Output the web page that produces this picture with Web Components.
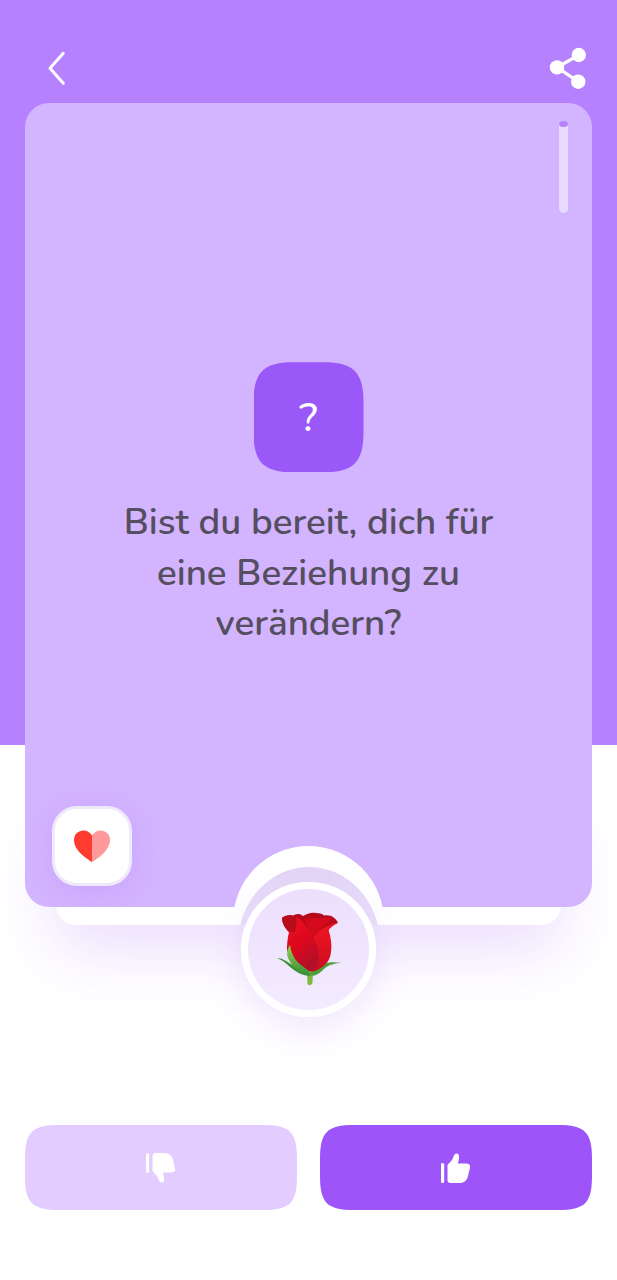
<!DOCTYPE html>
<html lang="de">
<head>
<meta charset="utf-8">
<title>Frage</title>
<style>
  html, body { margin: 0; padding: 0; background: #fff; }
  body { font-family: "Nunito", "Lato", "Noto Sans", sans-serif; }
</style>
</head>
<body>
<love-app>
  <app-header slot="header"></app-header>
  <question-card slot="card">Bist du bereit, dich für eine Beziehung zu verändern?</question-card>
  <vote-bar slot="footer"></vote-bar>
</love-app>

<script>
class LoveApp extends HTMLElement {
  constructor() {
    super();
    this.attachShadow({ mode: "open" });
    this.shadowRoot.innerHTML = `
      <style>
        :host {
          display: flex;
          flex-direction: column;
          width: 617px;
          height: 1280px;
          overflow: hidden;
          background: linear-gradient(#b681ff 0, #b681ff 745px, #fff 745px);
        }
      </style>
      <slot name="header"></slot>
      <slot name="card"></slot>
      <slot name="footer"></slot>
    `;
  }
}

class AppHeader extends HTMLElement {
  constructor() {
    super();
    this.attachShadow({ mode: "open" });
    this.shadowRoot.innerHTML = `
      <style>
        :host {
          display: flex;
          justify-content: space-between;
          align-items: flex-start;
          height: 103px;
          box-sizing: border-box;
          padding: 46px 27px 0 44px;
        }
        svg { display: block; }
      </style>
      <svg width="26" height="44" viewBox="0 0 26 44" fill="none" stroke="#fff" stroke-width="3" stroke-linecap="round" stroke-linejoin="round">
        <path d="M19.3 7.3 L6 22.3 L19.3 37.3"/>
      </svg>
      <svg width="44" height="44" viewBox="0 0 44 44" fill="#fff" stroke="#fff">
        <path d="M33 9 L11 21.4 L32.3 35.7" fill="none" stroke-width="3.2"/>
        <circle cx="32.8" cy="9" r="7.2" stroke="none"/>
        <circle cx="11" cy="21.4" r="7.2" stroke="none"/>
        <circle cx="32.2" cy="35.7" r="7.2" stroke="none"/>
      </svg>
    `;
  }
}

class QuestionCard extends HTMLElement {
  constructor() {
    super();
    this.attachShadow({ mode: "open" });
    this.shadowRoot.innerHTML = `
      <style>
        :host {
          display: block;
          position: relative;
          width: 567px;
          height: 804px;
          margin: 0 25px;
        }
        .plate {
          position: absolute;
          left: 31px; right: 31px; bottom: -18px; height: 120px;
          background: #fff;
          border-radius: 20px;
          box-shadow: 0 24px 64px rgba(157, 85, 250, .2);
        }
        .face {
          position: relative;
          box-sizing: border-box;
          height: 100%;
          display: flex;
          flex-direction: column;
          align-items: center;
          justify-content: center;
          gap: 25px;
          padding: 1px 70px 0;
          background: #d3b4ff;
          border-radius: 24px;
        }
        .tile {
          width: 110px;
          height: 110px;
          display: flex;
          align-items: center;
          justify-content: center;
          background: #9b58f9;
          clip-path: path("M40 0 L70 0 C100 0 110 10 110 40 L110 70 C110 100 100 110 70 110 L40 110 C10 110 0 100 0 70 L0 40 C0 10 10 0 40 0 Z");
          color: #fff;
          font: 500 41px/1 "Nunito", "Lato", sans-serif;
        }
        .text {
          margin: 0;
          text-align: center;
          color: #544e5f;
          font: 600 36.8px/50.5px "Nunito", "Lato", sans-serif;
        }
        .scroll {
          position: absolute;
          top: 18px; right: 24px;
          width: 9px; height: 92px;
          border-radius: 5px;
          background: rgba(255, 255, 255, .5);
        }
        .scroll i {
          display: block;
          height: 6px;
          border-radius: 50%;
          background: #b681ff;
        }
        .badge {
          position: absolute;
          left: 27px; bottom: 21px;
          box-sizing: border-box;
          width: 80px; height: 80px;
          display: flex;
          align-items: center;
          justify-content: center;
          background: #fff;
          border: 3px solid #efeafa;
          border-radius: 25px;
          box-shadow: 0 6px 26px rgba(157, 85, 250, .16);
        }
        .arc {
          position: absolute;
          left: 208px; top: 743px;
          width: 151px; height: 151px;
          border-radius: 50%;
          background: #fff;
          clip-path: inset(0 0 72px 0);
        }
        .halo {
          position: absolute;
          left: 212.500px; top: 764px;
          width: 142px; height: 154px;
          border-radius: 50%;
          background: linear-gradient(#e3d5f6 0, #e7dcf7 20%, #ecdffb 40%);
          clip-path: inset(0 0 96px 0);
        }
        .rose {
          position: absolute;
          left: 216px; top: 779px;
          box-sizing: border-box;
          width: 135px; height: 135px;
          border-radius: 50%;
          border: 7px solid #fff;
          background: linear-gradient(#ecdffd, #f3ebff);
          box-shadow: 0 14px 36px rgba(157, 85, 250, .14);
          display: flex;
          align-items: center;
          justify-content: center;
        }
        svg { display: block; }
      </style>
      <div class="plate"></div>
      <div class="face">
        <div class="tile">?</div>
        <p class="text"><slot></slot></p>
        <div class="scroll"><i></i></div>
        <div class="badge">
          <svg width="38" height="34" viewBox="0 0 38 34">
            <path d="M19 33 C14 30 1 22 1 11 C1 5 5.500 1.500 10.500 1.500 C14 1.500 17.500 3.500 19 6.500 Z" fill="#ff3b30"/>
            <path d="M19 33 C24 30 37 22 37 11 C37 5 32.500 1.500 27.500 1.500 C24 1.500 20.500 3.500 19 6.500 Z" fill="#ff9a9c"/>
          </svg>
        </div>
      </div>
      <div class="arc"></div>
      <div class="halo"></div>
      <div class="rose">
        <svg width="70" height="78" viewBox="0 0 70 78">
          <defs>
            <linearGradient id="main" x1="0" y1="0" x2=".5" y2="1">
              <stop offset="0" stop-color="#f0121f"/>
              <stop offset=".6" stop-color="#dc081d"/>
              <stop offset="1" stop-color="#b30f28"/>
            </linearGradient>
            <linearGradient id="side" x1="0" y1="0" x2="0" y2="1">
              <stop offset="0" stop-color="#f21522"/>
              <stop offset="1" stop-color="#cc0c20"/>
            </linearGradient>
            <linearGradient id="leaf" x1="0" y1="0" x2="0" y2="1">
              <stop offset="0" stop-color="#9ad155"/>
              <stop offset="1" stop-color="#3c8f38"/>
            </linearGradient>
          </defs>
          <path d="M33 60 L39 60 L38.500 72 Q36 76 33.500 73 Z" fill="#7dbb3c"/>
          <path d="M3 47 C8 47 12 50 17 53 C23 57 30 61 36 62 L36 65 C29 65 22 61 16 56 C12 52 8 49 3 47 Z" fill="#3f9238"/>
          <path d="M68 52 C61 51 55 51 49 53 C44 56 40 60 36 62 L37 65 C43 65 47 61 51 57 C55 54 61 52 68 52 Z" fill="#4f9e3c"/>
          <path d="M20 4 C24 2 27 3 29 5 C33 3 37 1 42 2 C46 2 49 3 50 4.500 C54 4 58 5 59.500 6.500 C62 8 63 10 64 11.700 C60 13 57 16 54.500 19 L50 35 L20 25 Z" fill="#b30b1b"/>
          <path d="M30 8 C38 6 50 8 59 6.500 C55 12 46 17 38 27 C36 20 33 13 30 8 Z" fill="#d40a1c"/>
          <path d="M38 28 C42 22 50 14 64 11.700 C60 14 56 16 54.500 19 C57 26 58 35 57 41 C56 50 51 56 41 60 L39 30 Z" fill="url(#side)"/>
          <path d="M8 7 C10 5 17 3 20 6 C25 7 27 8 30 12 C36 20 42 30 44 39 C45 47 45 53 42 59 C38 62 33 60 28 57 C21 53 15 47 13 39 C13 31 14 26 15 21 C12 18 8 13 8 7 Z" fill="url(#main)"/>
          <path d="M8 7 C11 4 17 3 21 5 C24 9 22 14 21 21 L15 21 C12 18 8 13 8 7 Z" fill="#b80c1c"/>
          <path d="M16 34 C17 42 21 50 27 54 C31 57 34 59 36 61 L31 63 C24 60 18 55 15 49 C12 44 13 38 16 34 Z" fill="url(#leaf)"/>
        </svg>
      </div>
    `;
  }
}

class VoteBar extends HTMLElement {
  constructor() {
    super();
    this.attachShadow({ mode: "open" });
    const hand = `
      <rect x="5" y="15" width="3.200" height="20" rx="1.600"/>
      <path d="M11.500 17 L16 12 C17.500 9 18 7 19 6 C21 4.500 23 6 23 8 C23.200 11 22.500 13 22 15.500 L30 15.500 C33 15.500 34.500 17 34 19.500 L32 28 C31 32 28.500 35 24 35 L14.500 35 C12.500 35 11.500 34 11.500 32 Z"/>
    `;
    this.shadowRoot.innerHTML = `
      <style>
        :host {
          display: grid;
          grid-template-columns: 272px 272px;
          gap: 23px;
          padding: 218px 25px 0;
        }
        button {
          height: 85px;
          border: 0;
          padding: 0;
          display: flex;
          align-items: center;
          justify-content: center;
          cursor: pointer;
          clip-path: path("M34 0 L238 0 C265 0 272 7 272 34 L272 51 C272 78 265 85 238 85 L34 85 C7 85 0 78 0 51 L0 34 C0 7 7 0 34 0 Z");
        }
        .no { background: #e3ccff; }
        .yes { background: #9d55fa; }
        svg { display: block; fill: #fff; }
        .no svg { transform: scaleY(-1); }
      </style>
      <button class="no" aria-label="Nein"><svg width="40" height="40" viewBox="0 0 40 40">${hand}</svg></button>
      <button class="yes" aria-label="Ja"><svg width="40" height="40" viewBox="0 0 40 40">${hand}</svg></button>
    `;
  }
}

customElements.define("love-app", LoveApp);
customElements.define("app-header", AppHeader);
customElements.define("question-card", QuestionCard);
customElements.define("vote-bar", VoteBar);
</script>
</body>
</html>
